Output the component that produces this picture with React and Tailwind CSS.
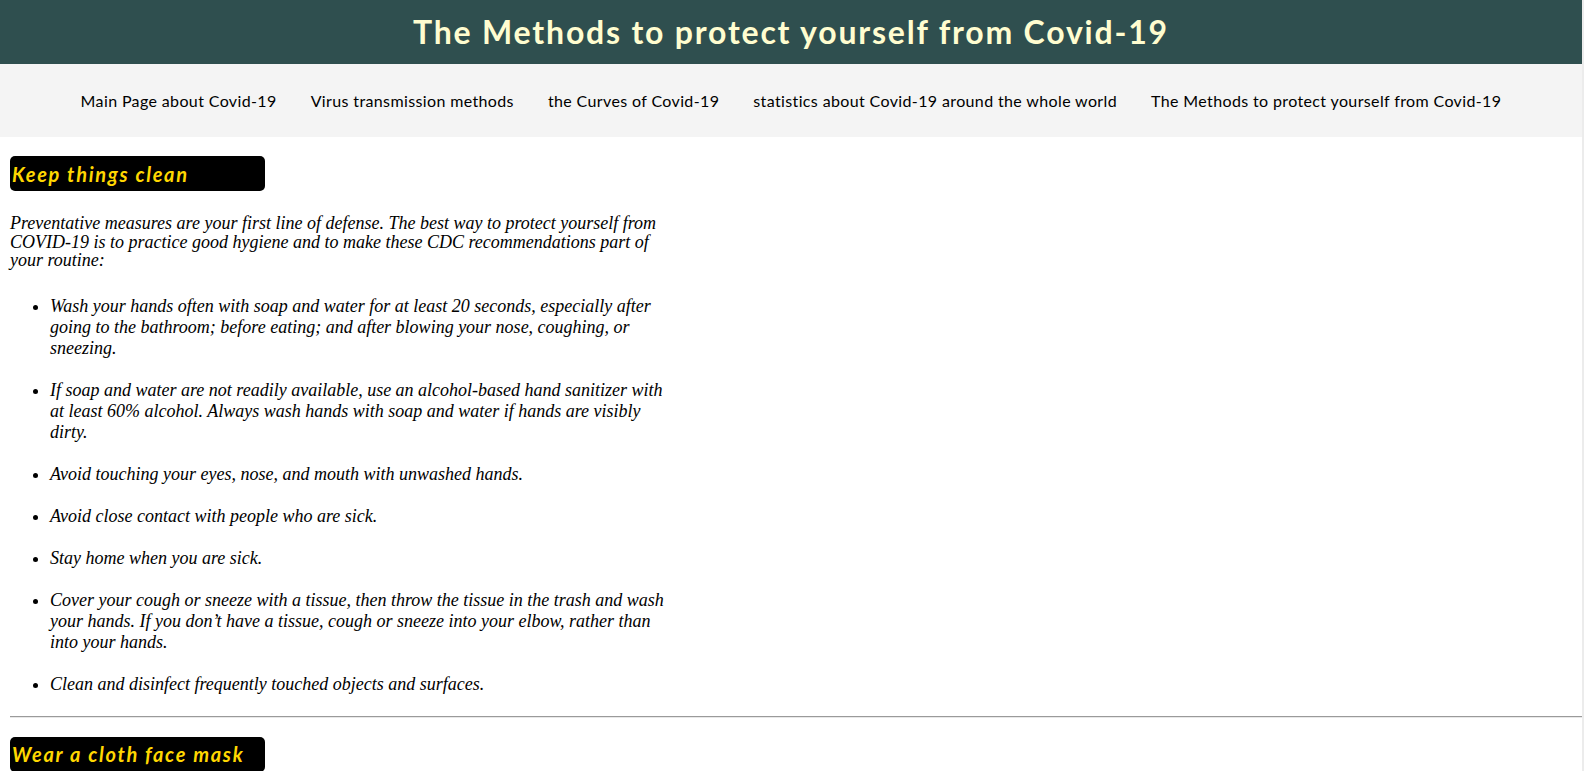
import React from "react";

const navLinks = [
  "Main Page about Covid-19",
  "Virus transmission methods",
  "the Curves of Covid-19",
  "statistics about Covid-19 around the whole world",
  "The Methods to protect yourself from Covid-19",
];

const cleanItems = [
  "Wash your hands often with soap and water for at least 20 seconds, especially after going to the bathroom; before eating; and after blowing your nose, coughing, or sneezing.",
  "If soap and water are not readily available, use an alcohol-based hand sanitizer with at least 60% alcohol. Always wash hands with soap and water if hands are visibly dirty.",
  "Avoid touching your eyes, nose, and mouth with unwashed hands.",
  "Avoid close contact with people who are sick.",
  "Stay home when you are sick.",
  "Cover your cough or sneeze with a tissue, then throw the tissue in the trash and wash your hands. If you don’t have a tissue, cough or sneeze into your elbow, rather than into your hands.",
  "Clean and disinfect frequently touched objects and surfaces.",
];

function SectionTitle({ children }) {
  return (
    <div className="ml-[10px] flex h-[35px] w-[255px] items-center rounded-[5px] bg-black pl-[2px]">
      <h2 className="font-['Comic_Sans_MS','Lato',sans-serif] text-[20px] font-bold italic leading-none tracking-[1.7px] text-[#ffd700]">
        {children}
      </h2>
    </div>
  );
}

export default function App() {
  return (
    <div className="min-h-screen w-full border-r-2 border-[#ececec] bg-white">
      <header className="flex h-16 items-center justify-center bg-[#2f4f4f]">
        <h1 className="font-['Comic_Sans_MS','Lato',sans-serif] text-[32px] font-bold leading-none tracking-[1.8px] text-[#fffdd0]">
          The Methods to protect yourself from Covid-19
        </h1>
      </header>
      <nav className="flex h-[73px] items-center justify-center gap-[34px] bg-[#f4f4f4]">
        {navLinks.map((l) => (
          <a
            key={l}
            href="#"
            className="font-['Comic_Sans_MS','Lato',sans-serif] text-[16px] tracking-[0.37px] text-black no-underline"
          >
            {l}
          </a>
        ))}
      </nav>

      <section className="pt-[19px]">
        <SectionTitle>Keep things clean</SectionTitle>
        <div className="ml-[10px] w-[664px] font-['Liberation_Serif',serif] text-[18px] italic text-black">
          <p className="mt-[23px] leading-[18.5px]">
            Preventative measures are your first line of defense. The best way to protect yourself
            from COVID-19 is to practice good hygiene and to make these CDC recommendations part of
            your routine:
          </p>
          <ul className="mt-[26px] list-disc pl-10 leading-[21px]">
            {cleanItems.map((t) => (
              <li key={t} className="mb-[21px] pl-0">
                {t}
              </li>
            ))}
          </ul>
        </div>
      </section>

      <hr className="ml-[10px] mt-[1px] h-0 border-0 border-t border-b border-t-[#9a9a9a] border-b-[#e8e8e8]" />

      <section className="pt-[19px] pb-10">
        <SectionTitle>Wear a cloth face mask</SectionTitle>
      </section>
    </div>
  );
}
